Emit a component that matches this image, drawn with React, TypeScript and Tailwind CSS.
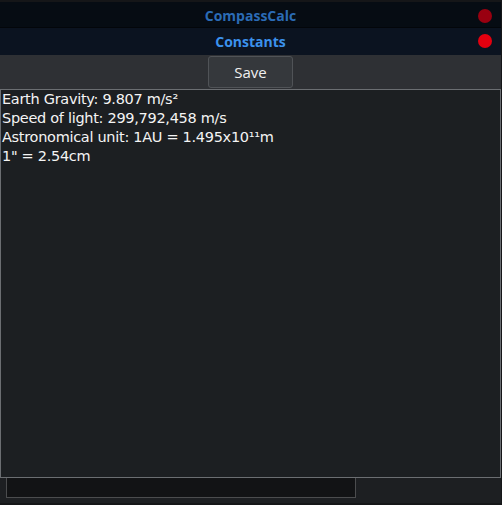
import React from "react";

const Dot = ({ color }: { color: string }) => (
  <span className={`w-[14px] h-[14px] rounded-full ${color}`} />
);

export default function App() {
  return (
    <div
      className="w-[502px] h-[505px] bg-[#151618] flex flex-col pt-[2px] pr-[1px] pb-[2px] overflow-hidden"
      style={{ fontFamily: '"Open Sans", "Noto Sans", sans-serif' }}
    >
      {/* window title */}
      <div className="h-[26px] bg-[#060c13] relative flex items-center justify-center pt-[3px] border-b border-[#03060a]">
        <span className="text-[14px] font-bold text-[#2b6bb5] leading-none">CompassCalc</span>
        <div className="absolute right-[9px] top-[7px] flex">
          <Dot color="bg-[#990010]" />
        </div>
      </div>
      {/* panel title */}
      <div className="h-[27px] bg-[#0b1320] relative flex items-center justify-center">
        <span className="text-[14px] font-bold text-[#3b91ec] leading-none">Constants</span>
        <div className="absolute right-[9px] top-[6px] flex">
          <Dot color="bg-[#e3000f]" />
        </div>
      </div>
      {/* toolbar */}
      <div className="h-[34px] bg-[#2e3034] flex items-start justify-center pt-[1px]">
        <button className="w-[85px] h-[32px] rounded-[3px] bg-[#35383c] border border-[#505357] text-[#f0f0f0] text-[15px] leading-none">
          Save
        </button>
      </div>
      {/* text area */}
      <div
        className="flex-1 bg-[#1c1f22] border border-[#6b6e72] px-[1px] pt-0 text-[#f4f4f4] text-[14.5px] tracking-[-0.3px] leading-[19px]"
        style={{ fontFamily: '"DejaVu Sans", "Noto Sans", sans-serif' }}
      >
        <div>Earth Gravity: 9.807 m/s²</div>
        <div>Speed of light: 299,792,458 m/s</div>
        <div>Astronomical unit: 1AU = 1.495x10¹¹m</div>
        <div>1" = 2.54cm</div>
      </div>
      {/* status row */}
      <div className="h-[25px] bg-[#1d1f22] flex items-start pl-[6px]">
        <div className="w-[350px] h-[20px] bg-[#121315] border border-t-0 border-[#4b4c4e]" />
      </div>
    </div>
  );
}
